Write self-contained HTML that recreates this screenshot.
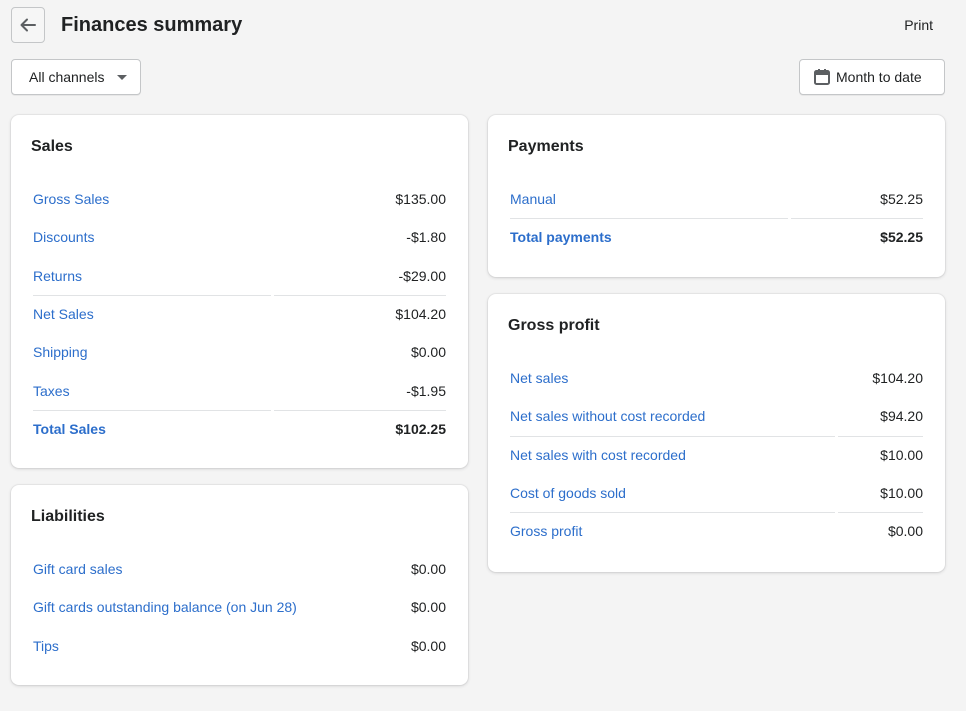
<!DOCTYPE html>
<html><head><meta charset="utf-8"><style>
*{box-sizing:border-box;margin:0;padding:0}
body{width:966px;height:711px;background:#f4f4f4;font-family:"Liberation Sans",sans-serif;color:#202223;position:relative;overflow:hidden;font-size:14px}
.back{position:absolute;left:11px;top:7px;width:34px;height:36px;border:1px solid #c4c6c8;border-radius:4px;background:#f6f6f6}
h1{position:absolute;left:61px;top:13px;font-size:20px;font-weight:600;line-height:24px}
.print{position:absolute;right:33px;top:17px;font-size:14px}
.btn{position:absolute;top:59px;height:36px;border:1px solid #c4c6c8;border-radius:4px;background:#fff;font-size:14px;line-height:34px;box-shadow:0 1px 0 rgba(0,0,0,.05)}
.card{position:absolute;background:#fff;border-radius:8px;box-shadow:0 0 0 1px rgba(63,63,68,.05),0 1px 3px rgba(63,63,68,.18);padding:0 22px}
.card h2{font-size:16px;font-weight:600;line-height:20px;position:absolute;left:20px;top:22px}
.rows{position:absolute;left:22px;right:22px;top:65px}
.row{height:38.3px;display:flex;align-items:center;position:relative}
.row .l{color:#2c6ecb;flex:1}
.row .v{text-align:right}
.row.b .l,.row.b .v{font-weight:600}
.row.d::before,.row.d::after{content:"";position:absolute;top:0;height:1px;background:#e1e3e5}
.row.d::before{left:0;width:var(--w)}
.row.d::after{left:calc(var(--w) + 3px);right:0}
</style></head><body>
<div class="back"><svg width="32" height="34" viewBox="0 0 32 34"><path d="M23 17H10M15 11.5L9.5 17 15 22.5" stroke="#5c5f62" stroke-width="2" fill="none" stroke-linecap="round" stroke-linejoin="round"/></svg></div>
<h1>Finances summary</h1>
<div class="print">Print</div>
<div class="btn" style="left:11px;width:130px;padding-left:17px">All channels<svg style="position:absolute;left:104px;top:14px" width="12" height="7"><path d="M1 1h10L6 6z" fill="#5c5f62"/></svg></div>
<div class="btn" style="left:799px;width:146px;padding-left:36px"><svg style="position:absolute;left:14px;top:9px" width="16" height="16" viewBox="0 0 16 16"><rect x="1" y="2" width="14" height="13" rx="1.5" fill="none" stroke="#5c5f62" stroke-width="2"/><rect x="1" y="2" width="14" height="4" fill="#5c5f62"/><rect x="4" y="0" width="2" height="3" fill="#5c5f62"/><rect x="10" y="0" width="2" height="3" fill="#5c5f62"/></svg>Month to date</div>

<div class="card" style="left:11px;top:115px;width:457px;height:353px">
<h2>Sales</h2>
<div class="rows" style="--w:238px">
<div class="row"><span class="l">Gross Sales</span><span class="v">$135.00</span></div>
<div class="row"><span class="l">Discounts</span><span class="v">-$1.80</span></div>
<div class="row"><span class="l">Returns</span><span class="v">-$29.00</span></div>
<div class="row d"><span class="l">Net Sales</span><span class="v">$104.20</span></div>
<div class="row"><span class="l">Shipping</span><span class="v">$0.00</span></div>
<div class="row"><span class="l">Taxes</span><span class="v">-$1.95</span></div>
<div class="row d b"><span class="l">Total Sales</span><span class="v">$102.25</span></div>
</div></div>

<div class="card" style="left:11px;top:485px;width:457px;height:200px">
<h2>Liabilities</h2>
<div class="rows">
<div class="row"><span class="l">Gift card sales</span><span class="v">$0.00</span></div>
<div class="row"><span class="l">Gift cards outstanding balance (on Jun 28)</span><span class="v">$0.00</span></div>
<div class="row"><span class="l">Tips</span><span class="v">$0.00</span></div>
</div></div>

<div class="card" style="left:488px;top:115px;width:457px;height:162px">
<h2>Payments</h2>
<div class="rows" style="--w:278px">
<div class="row"><span class="l">Manual</span><span class="v">$52.25</span></div>
<div class="row d b"><span class="l">Total payments</span><span class="v">$52.25</span></div>
</div></div>

<div class="card" style="left:488px;top:294px;width:457px;height:278px">
<h2>Gross profit</h2>
<div class="rows" style="--w:325px">
<div class="row"><span class="l">Net sales</span><span class="v">$104.20</span></div>
<div class="row"><span class="l">Net sales without cost recorded</span><span class="v">$94.20</span></div>
<div class="row d"><span class="l">Net sales with cost recorded</span><span class="v">$10.00</span></div>
<div class="row"><span class="l">Cost of goods sold</span><span class="v">$10.00</span></div>
<div class="row d"><span class="l">Gross profit</span><span class="v">$0.00</span></div>
</div></div>
</body></html>
